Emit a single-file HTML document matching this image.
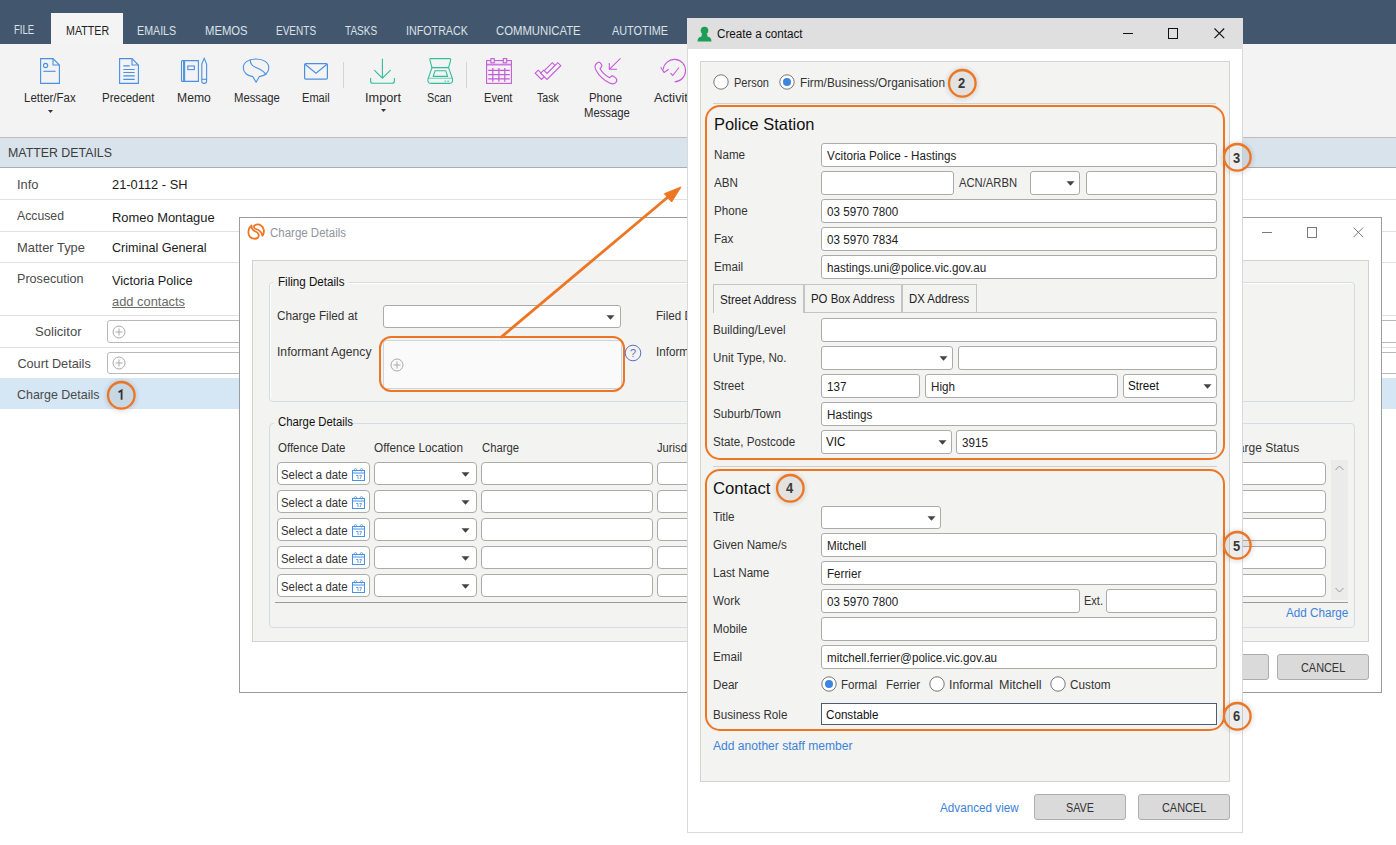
<!DOCTYPE html>
<html><head><meta charset="utf-8"><title>page</title>
<style>
html,body{margin:0;padding:0;}
body{width:1396px;height:845px;position:relative;overflow:hidden;background:#fff;font-family:'Liberation Sans', sans-serif;}
.a{position:absolute;}
.t{white-space:nowrap;}
svg.a{overflow:visible;}
</style></head><body>
<div class="a" style="left:0px;top:0px;width:1396px;height:44px;background:#42576e;"></div>
<div class="a" style="left:51px;top:13px;width:72px;height:31px;background:#f4f4f4;"></div>
<span class="a t" style="left:13.5px;top:24.42px;font-size:12.5px;line-height:12.5px;color:#dde2e8;font-weight:normal;font-family:'Liberation Sans', sans-serif;transform:scaleX(0.7612);transform-origin:0 0;">FILE</span>
<span class="a t" style="left:65.7px;top:25.42px;font-size:12.5px;line-height:12.5px;color:#1e1e1e;font-weight:normal;font-family:'Liberation Sans', sans-serif;transform:scaleX(0.8540);transform-origin:0 0;">MATTER</span>
<span class="a t" style="left:137.4px;top:25.42px;font-size:12.5px;line-height:12.5px;color:#dde2e8;font-weight:normal;font-family:'Liberation Sans', sans-serif;transform:scaleX(0.8548);transform-origin:0 0;">EMAILS</span>
<span class="a t" style="left:205.2px;top:25.42px;font-size:12.5px;line-height:12.5px;color:#dde2e8;font-weight:normal;font-family:'Liberation Sans', sans-serif;transform:scaleX(0.9019);transform-origin:0 0;">MEMOS</span>
<span class="a t" style="left:276.4px;top:25.42px;font-size:12.5px;line-height:12.5px;color:#dde2e8;font-weight:normal;font-family:'Liberation Sans', sans-serif;transform:scaleX(0.8017);transform-origin:0 0;">EVENTS</span>
<span class="a t" style="left:345.2px;top:25.42px;font-size:12.5px;line-height:12.5px;color:#dde2e8;font-weight:normal;font-family:'Liberation Sans', sans-serif;transform:scaleX(0.8037);transform-origin:0 0;">TASKS</span>
<span class="a t" style="left:406.3px;top:25.42px;font-size:12.5px;line-height:12.5px;color:#dde2e8;font-weight:normal;font-family:'Liberation Sans', sans-serif;transform:scaleX(0.8569);transform-origin:0 0;">INFOTRACK</span>
<span class="a t" style="left:496px;top:25.42px;font-size:12.5px;line-height:12.5px;color:#dde2e8;font-weight:normal;font-family:'Liberation Sans', sans-serif;transform:scaleX(0.9047);transform-origin:0 0;">COMMUNICATE</span>
<span class="a t" style="left:612px;top:25.42px;font-size:12.5px;line-height:12.5px;color:#dde2e8;font-weight:normal;font-family:'Liberation Sans', sans-serif;transform:scaleX(0.8701);transform-origin:0 0;">AUTOTIME</span>
<div class="a" style="left:0px;top:44px;width:1396px;height:93px;background:#f3f3f3;"></div>
<div class="a" style="left:0px;top:137px;width:1396px;height:1px;background:#bdbdbd;"></div>
<span class="a t" style="left:24.3px;top:91.84px;font-size:12px;line-height:12px;color:#2b2b2b;font-weight:normal;font-family:'Liberation Sans', sans-serif;transform:scaleX(0.9569);transform-origin:0 0;">Letter/Fax</span>
<span class="a t" style="left:102.3px;top:91.84px;font-size:12px;line-height:12px;color:#2b2b2b;font-weight:normal;font-family:'Liberation Sans', sans-serif;transform:scaleX(0.9579);transform-origin:0 0;">Precedent</span>
<span class="a t" style="left:177.2px;top:91.84px;font-size:12px;line-height:12px;color:#2b2b2b;font-weight:normal;font-family:'Liberation Sans', sans-serif;transform:scaleX(1.0137);transform-origin:0 0;">Memo</span>
<span class="a t" style="left:233.6px;top:91.84px;font-size:12px;line-height:12px;color:#2b2b2b;font-weight:normal;font-family:'Liberation Sans', sans-serif;transform:scaleX(0.9424);transform-origin:0 0;">Message</span>
<span class="a t" style="left:302px;top:91.84px;font-size:12px;line-height:12px;color:#2b2b2b;font-weight:normal;font-family:'Liberation Sans', sans-serif;transform:scaleX(0.9229);transform-origin:0 0;">Email</span>
<span class="a t" style="left:365px;top:91.84px;font-size:12px;line-height:12px;color:#2b2b2b;font-weight:normal;font-family:'Liberation Sans', sans-serif;transform:scaleX(1.0613);transform-origin:0 0;">Import</span>
<span class="a t" style="left:427.2px;top:91.84px;font-size:12px;line-height:12px;color:#2b2b2b;font-weight:normal;font-family:'Liberation Sans', sans-serif;transform:scaleX(0.8955);transform-origin:0 0;">Scan</span>
<span class="a t" style="left:484.4px;top:91.84px;font-size:12px;line-height:12px;color:#2b2b2b;font-weight:normal;font-family:'Liberation Sans', sans-serif;transform:scaleX(0.9255);transform-origin:0 0;">Event</span>
<span class="a t" style="left:537.3px;top:91.84px;font-size:12px;line-height:12px;color:#2b2b2b;font-weight:normal;font-family:'Liberation Sans', sans-serif;transform:scaleX(0.8871);transform-origin:0 0;">Task</span>
<span class="a t" style="left:589.4px;top:91.84px;font-size:12px;line-height:12px;color:#2b2b2b;font-weight:normal;font-family:'Liberation Sans', sans-serif;transform:scaleX(0.9509);transform-origin:0 0;">Phone</span>
<span class="a t" style="left:583.7px;top:107.04px;font-size:12px;line-height:12px;color:#2b2b2b;font-weight:normal;font-family:'Liberation Sans', sans-serif;transform:scaleX(0.9424);transform-origin:0 0;">Message</span>
<span class="a t" style="left:654px;top:91.84px;font-size:12px;line-height:12px;color:#2b2b2b;font-weight:normal;font-family:'Liberation Sans', sans-serif;transform:scaleX(1.0561);transform-origin:0 0;">Activities</span>
<svg class="a" style="left:47.5px;top:109.5px;" width="5" height="3" viewBox="0 0 5 3"><path d="M0 0H5L2.5 3Z" fill="#333"/></svg>
<svg class="a" style="left:380.5px;top:108.5px;" width="5" height="3" viewBox="0 0 5 3"><path d="M0 0H5L2.5 3Z" fill="#333"/></svg>
<div class="a" style="left:343px;top:62px;width:1px;height:26px;background:#d4d4d4;"></div>
<div class="a" style="left:466px;top:62px;width:1px;height:26px;background:#d4d4d4;"></div>
<svg class="a" style="left:0;top:0" width="687" height="137" viewBox="0 0 687 137"><g fill="none" stroke="#4a90e2" stroke-width="1.1" stroke-linejoin="miter"><path d="M40.6 58.6H53L59.4 65V83.4H40.6Z"/><path d="M53 58.8V65H59.2" stroke-linejoin="round"/><circle cx="45.6" cy="65.5" r="2.1"/><path d="M43.3 71.3H55.6"/></g><g fill="none" stroke="#4a90e2" stroke-width="1.1"><path d="M119.6 58.6H132L138.4 65V83.4H119.6Z"/><path d="M132 58.8V65H138.2"/><path d="M123.3 65.9H129.7M123.3 69.5H134.7M123.3 72.5H134.7M123.3 75.8H134.7M123.3 79.3H134.7" stroke-width="1.2"/></g><g fill="none" stroke="#4a90e2" stroke-width="1.1"><path d="M184.6 60.6H198.4V81.4H184.6Z"/><path d="M183.6 60.6H182.5Q181.5 60.6 181.5 61.6V80.4Q181.5 81.4 182.5 81.4H183.6Z"/><rect x="187.8" y="66" width="6.6" height="3.6"/><path d="M201.8 64L204.2 58.3L206.6 64V81.6Q206.6 83.4 204.2 83.4Q201.8 83.4 201.8 81.6Z"/><path d="M201.8 79.3H206.6"/></g><g fill="none" stroke="#4a90e2" stroke-width="1.1" stroke-linejoin="round"><path d="M256 59C263.5 59 268.8 62.5 268.8 67.8C268.8 72.5 265 76 259.3 76.6L256.1 82.3L252.8 76.6C247.3 76 243.3 72.5 243.3 67.8C243.3 62.5 248.5 59 256 59Z"/><path d="M250.3 59.5C250 63 252 66 256 67.5C261 69.5 264.5 71 266 75"/></g><g fill="none" stroke="#4a90e2" stroke-width="1.2"><rect x="304.6" y="63.6" width="22.8" height="15.6" rx="1.2"/><path d="M305 64.2L316 73.2L327 64.2"/></g><g fill="none" stroke="#2fbf9a" stroke-width="1.1"><path d="M382.4 58.8V78.2M374.3 70.1L382.4 78.2L390.6 70.1"/><path d="M370.6 78V81Q370.6 83.3 373 83.3H392Q394.4 83.3 394.4 81V78"/></g><g fill="none" stroke="#2fbf9a" stroke-width="1.1" stroke-linejoin="round"><path d="M430.5 58.6H449.6Q451 58.6 450.6 60.4L448.6 67.6H432L430 60.4Q429.6 58.6 430.5 58.6Z"/><path d="M432 67.6L428 79Q427.3 83.4 431 83.4H449.5Q453.2 83.4 452.5 79L448.6 67.6"/><path d="M435 70.8H445.8L447.6 76.4H433.2Z"/><path d="M428.3 78.3H452.2" stroke-opacity="0.6"/><path d="M431.5 67.5H449" stroke-opacity="0.5"/><path d="M444.6 81.2H446.2M447.4 81.2H449" stroke-width="1"/></g><g fill="none" stroke="#c35bd9" stroke-width="1.1"><rect x="486.6" y="60.6" width="24.8" height="22.8"/><path d="M486.6 64.6H511.4" stroke-width="1.8" stroke-opacity="0.8"/><rect x="490.9" y="58.6" width="3.4" height="4.2" fill="#f3f3f3"/><rect x="503.3" y="58.6" width="3.4" height="4.2" fill="#f3f3f3"/><path d="M488.2 70.3H509.8M488.2 74.6H509.8M488.2 78.9H509.8M492.8 68V81.8M498.9 68V81.8M504.8 68V81.8" stroke-width="1.2"/></g><g fill="#f3f3f3" stroke="#c35bd9" stroke-width="1.1" stroke-linejoin="miter"><path d="M535.2 73.2L538.2 70.2L541.5 73.5L552.3 62.7L555.3 65.7L541.5 79.5Z"/><path d="M540.7 73.2L543.7 70.2L547 73.5L557.8 62.7L560.8 65.7L547 79.5Z"/></g><g fill="none" stroke="#c35bd9" stroke-width="1.1" stroke-linejoin="round"><path d="M596.5 63.5C594.8 65 594.6 67.5 596 70.2C598.6 75 604.6 80.6 609.6 83C612 84.2 614.6 84 616 82.3C617.2 80.8 617 79.3 615.8 78.2L614 76.6C612.8 75.6 611.5 75.8 610.5 76.8L609.5 77.8C606 76 601.8 72 600 68.6L601 67.4C602 66.3 602 64.9 601.1 63.8L599.8 62.4C598.9 61.6 597.6 62.5 596.5 63.5Z"/><path d="M620.5 58.3L609.3 69.3M609.3 62.9V69.3H617"/></g><g fill="none" stroke="#c35bd9" stroke-width="1.1"><path d="M663.2 69.5A11.2 11.2 0 1 1 674.6 81.8"/><path d="M660.7 67.3L664.1 72.4L668.7 69.2"/><path d="M670.4 73.2L672.7 75.5L679 67.5"/></g></svg>
<div class="a" style="left:0px;top:138px;width:1396px;height:29px;background:#d9e3ec;"></div>
<div class="a" style="left:0px;top:167px;width:1396px;height:1px;background:#a8adb3;"></div>
<span class="a t" style="left:7.5px;top:146.29px;font-size:13.6px;line-height:13.6px;color:#3d3d3d;font-weight:normal;font-family:'Liberation Sans', sans-serif;transform:scaleX(0.9098);transform-origin:0 0;">MATTER DETAILS</span>
<span class="a t" style="left:17.4px;top:179.45px;font-size:12.7px;line-height:12.7px;color:#4a4a4a;font-weight:normal;font-family:'Liberation Sans', sans-serif;transform:scaleX(1.0155);transform-origin:0 0;">Info</span>
<span class="a t" style="left:112.3px;top:179.45px;font-size:12.7px;line-height:12.7px;color:#1b1b1b;font-weight:normal;font-family:'Liberation Sans', sans-serif;transform:scaleX(1.0130);transform-origin:0 0;">21-0112 - SH</span>
<div class="a" style="left:0px;top:199px;width:1396px;height:1px;background:#e1e1e1;"></div>
<span class="a t" style="left:17.4px;top:210.45px;font-size:12.7px;line-height:12.7px;color:#4a4a4a;font-weight:normal;font-family:'Liberation Sans', sans-serif;transform:scaleX(0.9657);transform-origin:0 0;">Accused</span>
<span class="a t" style="left:112.3px;top:212.05px;font-size:12.7px;line-height:12.7px;color:#1b1b1b;font-weight:normal;font-family:'Liberation Sans', sans-serif;transform:scaleX(1.0173);transform-origin:0 0;">Romeo Montague</span>
<div class="a" style="left:0px;top:231px;width:1396px;height:1px;background:#e1e1e1;"></div>
<span class="a t" style="left:17.4px;top:241.95px;font-size:12.7px;line-height:12.7px;color:#4a4a4a;font-weight:normal;font-family:'Liberation Sans', sans-serif;transform:scaleX(1.0185);transform-origin:0 0;">Matter Type</span>
<span class="a t" style="left:112.3px;top:241.75px;font-size:12.7px;line-height:12.7px;color:#1b1b1b;font-weight:normal;font-family:'Liberation Sans', sans-serif;transform:scaleX(0.9928);transform-origin:0 0;">Criminal General</span>
<div class="a" style="left:0px;top:262px;width:1396px;height:1px;background:#e1e1e1;"></div>
<span class="a t" style="left:17.4px;top:272.65px;font-size:12.7px;line-height:12.7px;color:#4a4a4a;font-weight:normal;font-family:'Liberation Sans', sans-serif;transform:scaleX(0.9925);transform-origin:0 0;">Prosecution</span>
<span class="a t" style="left:112.3px;top:274.55px;font-size:12.7px;line-height:12.7px;color:#1b1b1b;font-weight:normal;font-family:'Liberation Sans', sans-serif;transform:scaleX(1.0041);transform-origin:0 0;">Victoria Police</span>
<span class="a t" style="left:112.3px;top:295.75px;font-size:12.7px;line-height:12.7px;color:#6a6a6a;font-weight:normal;font-family:'Liberation Sans', sans-serif;transform:scaleX(1.0145);transform-origin:0 0;text-decoration:underline;">add contacts</span>
<div class="a" style="left:0px;top:315px;width:1396px;height:1px;background:#e1e1e1;"></div>
<span class="a t" style="left:35px;top:326.25px;font-size:12.7px;line-height:12.7px;color:#4a4a4a;font-weight:normal;font-family:'Liberation Sans', sans-serif;transform:scaleX(1.0305);transform-origin:0 0;">Solicitor</span>
<div class="a" style="left:107px;top:320px;width:1293px;height:23px;background:#fff;border:1px solid #b9b9b9;box-sizing:border-box;border-radius:3px;"></div>
<div class="a" style="left:0px;top:347px;width:1396px;height:1px;background:#e1e1e1;"></div>
<span class="a t" style="left:17.4px;top:357.95px;font-size:12.7px;line-height:12.7px;color:#4a4a4a;font-weight:normal;font-family:'Liberation Sans', sans-serif;">Court Details</span>
<div class="a" style="left:107px;top:352px;width:1293px;height:22px;background:#fff;border:1px solid #b9b9b9;box-sizing:border-box;border-radius:3px;"></div>
<svg class="a" style="left:112px;top:324.5px;" width="14" height="14" viewBox="0 0 14 14"><circle cx="7" cy="7" r="6" fill="none" stroke="#aaa" stroke-width="1"/><path d="M7 3.5V10.5M3.5 7H10.5" stroke="#aaa" stroke-width="1"/></svg>
<svg class="a" style="left:112px;top:355.5px;" width="14" height="14" viewBox="0 0 14 14"><circle cx="7" cy="7" r="6" fill="none" stroke="#aaa" stroke-width="1"/><path d="M7 3.5V10.5M3.5 7H10.5" stroke="#aaa" stroke-width="1"/></svg>
<div class="a" style="left:0px;top:378px;width:1396px;height:31px;background:#d5e6f5;"></div>
<span class="a t" style="left:17.4px;top:389.25px;font-size:12.7px;line-height:12.7px;color:#4a4a4a;font-weight:normal;font-family:'Liberation Sans', sans-serif;transform:scaleX(0.9819);transform-origin:0 0;">Charge Details</span>
<div class="a" style="left:239px;top:217px;width:1143px;height:476px;background:#fff;border:1px solid #9c9c9c;box-sizing:border-box;"></div>
<svg class="a" style="left:244px;top:220px;" width="26" height="24" viewBox="0 0 26 24"><path d="M7.5 5.5C4 8.5 3.5 14 6 16.8C8 19 12 19.5 14 17.5C15.5 15.5 14.5 12.5 11.5 11.5C9 10.5 7.5 9 7.5 5.5Z" fill="none" stroke="#ee7623" stroke-width="1.8" stroke-linejoin="round"/><path d="M18.5 15.8C21 12.5 20 7.5 17 5.5C15 4 12 4.5 10.5 5.5C9.5 6.5 10 8.5 12 9C15 10 17.5 11 18.5 15.8Z" fill="none" stroke="#ee7623" stroke-width="1.8" stroke-linejoin="round"/></svg>
<span class="a t" style="left:269.6px;top:226.72px;font-size:12.5px;line-height:12.5px;color:#8e959c;font-weight:normal;font-family:'Liberation Sans', sans-serif;transform:scaleX(0.9191);transform-origin:0 0;">Charge Details</span>
<div class="a" style="left:1262px;top:232px;width:10px;height:1px;background:#7a7a7a;"></div>
<div class="a" style="left:1307px;top:227px;width:10px;height:10.5px;background:transparent;border:1px solid #7a7a7a;box-sizing:border-box;"></div>
<svg class="a" style="left:1353px;top:227px;" width="11" height="11" viewBox="0 0 11 11"><path d="M0.5 0.5L10.2 10.2M10.2 0.5L0.5 10.2" stroke="#7a7a7a" stroke-width="1"/></svg>
<div class="a" style="left:252px;top:260px;width:1117px;height:382px;background:#f3f3f2;border:1px solid #d2d2d2;box-sizing:border-box;"></div>
<div class="a" style="left:269px;top:282px;width:1086px;height:120px;background:transparent;border:1px solid #d3dde6;box-sizing:border-box;border-radius:4px;box-shadow: inset 1px 1px 0 #fff;"></div>
<div class="a" style="left:273px;top:276px;width:75px;height:14px;background:#f3f3f2;"></div>
<span class="a t" style="left:277.5px;top:275.64px;font-size:12px;line-height:12px;color:#111;font-weight:normal;font-family:'Liberation Sans', sans-serif;transform:scaleX(0.9679);transform-origin:0 0;">Filing Details</span>
<span class="a t" style="left:277.3px;top:309.84px;font-size:12px;line-height:12px;color:#333;font-weight:normal;font-family:'Liberation Sans', sans-serif;transform:scaleX(0.9811);transform-origin:0 0;">Charge Filed at</span>
<div class="a" style="left:383px;top:305px;width:238px;height:23px;background:#fff;border:1px solid #ababab;box-sizing:border-box;border-radius:3px;"></div>
<svg class="a" style="left:606px;top:315px;" width="9" height="5" viewBox="0 0 9 5"><path d="M0.5 0.3H8.5L4.5 4.8Z" fill="#444"/></svg>
<span class="a t" style="left:656.4px;top:309.84px;font-size:12px;line-height:12px;color:#333;font-weight:normal;font-family:'Liberation Sans', sans-serif;transform:scaleX(0.9700);transform-origin:0 0;">Filed Date</span>
<span class="a t" style="left:277.3px;top:346.24px;font-size:12px;line-height:12px;color:#333;font-weight:normal;font-family:'Liberation Sans', sans-serif;transform:scaleX(1.0119);transform-origin:0 0;">Informant Agency</span>
<div class="a" style="left:383px;top:340px;width:239px;height:49px;background:#fafafa;border:1px solid #cbd7e0;box-sizing:border-box;border-radius:3px;"></div>
<svg class="a" style="left:389.5px;top:358px;" width="14" height="14" viewBox="0 0 14 14"><circle cx="7" cy="7" r="6" fill="none" stroke="#aaa" stroke-width="1"/><path d="M7 3.5V10.5M3.5 7H10.5" stroke="#aaa" stroke-width="1"/></svg>
<div class="a" style="left:379px;top:336px;width:246px;height:56px;background:transparent;border:2.5px solid #ee7623;box-sizing:border-box;border-radius:12px;"></div>
<svg class="a" style="left:624px;top:344px;" width="18" height="18" viewBox="0 0 18 18"><circle cx="9" cy="9" r="7.8" fill="none" stroke="#5a6fc9" stroke-width="1"/><text x="9" y="13" text-anchor="middle" font-family="Liberation Sans" font-size="11" fill="#5a6fc9">?</text></svg>
<span class="a t" style="left:656.4px;top:346.24px;font-size:12px;line-height:12px;color:#333;font-weight:normal;font-family:'Liberation Sans', sans-serif;transform:scaleX(0.9700);transform-origin:0 0;">Informant Name</span>
<svg class="a" style="left:495px;top:180px;" width="200" height="165" viewBox="0 0 200 165"><path d="M6.5 156.9L173 17" stroke="#ee7623" stroke-width="2.8" stroke-linecap="round"/><path d="M186 7L169.3 13.7L176.6 22Z" fill="#ee7623" stroke="#ee7623" stroke-width="1" stroke-linejoin="round"/></svg>
<div class="a" style="left:269px;top:423px;width:1086px;height:205px;background:transparent;border:1px solid #d3dde6;box-sizing:border-box;border-radius:4px;"></div>
<div class="a" style="left:274px;top:416px;width:72px;height:14px;background:#f3f3f2;"></div>
<span class="a t" style="left:277.6px;top:416.44px;font-size:12px;line-height:12px;color:#111;font-weight:normal;font-family:'Liberation Sans', sans-serif;transform:scaleX(0.9449);transform-origin:0 0;">Charge Details</span>
<span class="a t" style="left:277.6px;top:442.34px;font-size:12px;line-height:12px;color:#333;font-weight:normal;font-family:'Liberation Sans', sans-serif;transform:scaleX(0.9574);transform-origin:0 0;">Offence Date</span>
<span class="a t" style="left:374.2px;top:442.34px;font-size:12px;line-height:12px;color:#333;font-weight:normal;font-family:'Liberation Sans', sans-serif;transform:scaleX(0.9833);transform-origin:0 0;">Offence Location</span>
<span class="a t" style="left:481.7px;top:442.34px;font-size:12px;line-height:12px;color:#333;font-weight:normal;font-family:'Liberation Sans', sans-serif;transform:scaleX(0.9401);transform-origin:0 0;">Charge</span>
<span class="a t" style="left:657.4px;top:442.34px;font-size:12px;line-height:12px;color:#333;font-weight:normal;font-family:'Liberation Sans', sans-serif;transform:scaleX(0.9328);transform-origin:0 0;">Jurisdiction</span>
<span class="a t" style="left:1222.5px;top:442.34px;font-size:12px;line-height:12px;color:#333;font-weight:normal;font-family:'Liberation Sans', sans-serif;">Charge Status</span>
<div class="a" style="left:277px;top:462px;width:93px;height:23px;background:#fff;border:1px solid #ababab;box-sizing:border-box;border-radius:4px;"></div>
<span class="a t" style="left:281.2px;top:468.64px;font-size:12px;line-height:12px;color:#333;font-weight:normal;font-family:'Liberation Sans', sans-serif;transform:scaleX(0.9506);transform-origin:0 0;">Select a date</span>
<svg class="a" style="left:352px;top:467.5px;" width="13" height="13" viewBox="0 0 13 13"><rect x="0.5" y="2.5" width="12" height="10" fill="none" stroke="#4a90e2" stroke-width="1"/><path d="M0.5 5H12.5" stroke="#4a90e2" stroke-width="1"/><circle cx="3.5" cy="1.8" r="1.2" fill="none" stroke="#4a90e2" stroke-width="0.8"/><circle cx="9.5" cy="1.8" r="1.2" fill="none" stroke="#4a90e2" stroke-width="0.8"/><path d="M4 7.5H6V11M7.5 7.5H9.5L8 11" fill="none" stroke="#4a90e2" stroke-width="0.8"/></svg>
<div class="a" style="left:374px;top:462px;width:103px;height:23px;background:#fff;border:1px solid #ababab;box-sizing:border-box;border-radius:4px;"></div>
<svg class="a" style="left:461px;top:471.5px;" width="9" height="5" viewBox="0 0 9 5"><path d="M0.5 0.3H8.5L4.5 4.8Z" fill="#444"/></svg>
<div class="a" style="left:481px;top:462px;width:172px;height:23px;background:#fff;border:1px solid #ababab;box-sizing:border-box;border-radius:4px;"></div>
<div class="a" style="left:657px;top:462px;width:243px;height:23px;background:#fff;border:1px solid #ababab;box-sizing:border-box;border-radius:4px;"></div>
<div class="a" style="left:1100px;top:462px;width:226px;height:23px;background:#fff;border:1px solid #ababab;box-sizing:border-box;border-radius:4px;"></div>
<div class="a" style="left:277px;top:490px;width:93px;height:23px;background:#fff;border:1px solid #ababab;box-sizing:border-box;border-radius:4px;"></div>
<span class="a t" style="left:281.2px;top:496.64px;font-size:12px;line-height:12px;color:#333;font-weight:normal;font-family:'Liberation Sans', sans-serif;transform:scaleX(0.9506);transform-origin:0 0;">Select a date</span>
<svg class="a" style="left:352px;top:495.5px;" width="13" height="13" viewBox="0 0 13 13"><rect x="0.5" y="2.5" width="12" height="10" fill="none" stroke="#4a90e2" stroke-width="1"/><path d="M0.5 5H12.5" stroke="#4a90e2" stroke-width="1"/><circle cx="3.5" cy="1.8" r="1.2" fill="none" stroke="#4a90e2" stroke-width="0.8"/><circle cx="9.5" cy="1.8" r="1.2" fill="none" stroke="#4a90e2" stroke-width="0.8"/><path d="M4 7.5H6V11M7.5 7.5H9.5L8 11" fill="none" stroke="#4a90e2" stroke-width="0.8"/></svg>
<div class="a" style="left:374px;top:490px;width:103px;height:23px;background:#fff;border:1px solid #ababab;box-sizing:border-box;border-radius:4px;"></div>
<svg class="a" style="left:461px;top:499.5px;" width="9" height="5" viewBox="0 0 9 5"><path d="M0.5 0.3H8.5L4.5 4.8Z" fill="#444"/></svg>
<div class="a" style="left:481px;top:490px;width:172px;height:23px;background:#fff;border:1px solid #ababab;box-sizing:border-box;border-radius:4px;"></div>
<div class="a" style="left:657px;top:490px;width:243px;height:23px;background:#fff;border:1px solid #ababab;box-sizing:border-box;border-radius:4px;"></div>
<div class="a" style="left:1100px;top:490px;width:226px;height:23px;background:#fff;border:1px solid #ababab;box-sizing:border-box;border-radius:4px;"></div>
<div class="a" style="left:277px;top:518px;width:93px;height:23px;background:#fff;border:1px solid #ababab;box-sizing:border-box;border-radius:4px;"></div>
<span class="a t" style="left:281.2px;top:524.64px;font-size:12px;line-height:12px;color:#333;font-weight:normal;font-family:'Liberation Sans', sans-serif;transform:scaleX(0.9506);transform-origin:0 0;">Select a date</span>
<svg class="a" style="left:352px;top:523.5px;" width="13" height="13" viewBox="0 0 13 13"><rect x="0.5" y="2.5" width="12" height="10" fill="none" stroke="#4a90e2" stroke-width="1"/><path d="M0.5 5H12.5" stroke="#4a90e2" stroke-width="1"/><circle cx="3.5" cy="1.8" r="1.2" fill="none" stroke="#4a90e2" stroke-width="0.8"/><circle cx="9.5" cy="1.8" r="1.2" fill="none" stroke="#4a90e2" stroke-width="0.8"/><path d="M4 7.5H6V11M7.5 7.5H9.5L8 11" fill="none" stroke="#4a90e2" stroke-width="0.8"/></svg>
<div class="a" style="left:374px;top:518px;width:103px;height:23px;background:#fff;border:1px solid #ababab;box-sizing:border-box;border-radius:4px;"></div>
<svg class="a" style="left:461px;top:527.5px;" width="9" height="5" viewBox="0 0 9 5"><path d="M0.5 0.3H8.5L4.5 4.8Z" fill="#444"/></svg>
<div class="a" style="left:481px;top:518px;width:172px;height:23px;background:#fff;border:1px solid #ababab;box-sizing:border-box;border-radius:4px;"></div>
<div class="a" style="left:657px;top:518px;width:243px;height:23px;background:#fff;border:1px solid #ababab;box-sizing:border-box;border-radius:4px;"></div>
<div class="a" style="left:1100px;top:518px;width:226px;height:23px;background:#fff;border:1px solid #ababab;box-sizing:border-box;border-radius:4px;"></div>
<div class="a" style="left:277px;top:546px;width:93px;height:23px;background:#fff;border:1px solid #ababab;box-sizing:border-box;border-radius:4px;"></div>
<span class="a t" style="left:281.2px;top:552.64px;font-size:12px;line-height:12px;color:#333;font-weight:normal;font-family:'Liberation Sans', sans-serif;transform:scaleX(0.9506);transform-origin:0 0;">Select a date</span>
<svg class="a" style="left:352px;top:551.5px;" width="13" height="13" viewBox="0 0 13 13"><rect x="0.5" y="2.5" width="12" height="10" fill="none" stroke="#4a90e2" stroke-width="1"/><path d="M0.5 5H12.5" stroke="#4a90e2" stroke-width="1"/><circle cx="3.5" cy="1.8" r="1.2" fill="none" stroke="#4a90e2" stroke-width="0.8"/><circle cx="9.5" cy="1.8" r="1.2" fill="none" stroke="#4a90e2" stroke-width="0.8"/><path d="M4 7.5H6V11M7.5 7.5H9.5L8 11" fill="none" stroke="#4a90e2" stroke-width="0.8"/></svg>
<div class="a" style="left:374px;top:546px;width:103px;height:23px;background:#fff;border:1px solid #ababab;box-sizing:border-box;border-radius:4px;"></div>
<svg class="a" style="left:461px;top:555.5px;" width="9" height="5" viewBox="0 0 9 5"><path d="M0.5 0.3H8.5L4.5 4.8Z" fill="#444"/></svg>
<div class="a" style="left:481px;top:546px;width:172px;height:23px;background:#fff;border:1px solid #ababab;box-sizing:border-box;border-radius:4px;"></div>
<div class="a" style="left:657px;top:546px;width:243px;height:23px;background:#fff;border:1px solid #ababab;box-sizing:border-box;border-radius:4px;"></div>
<div class="a" style="left:1100px;top:546px;width:226px;height:23px;background:#fff;border:1px solid #ababab;box-sizing:border-box;border-radius:4px;"></div>
<div class="a" style="left:277px;top:574px;width:93px;height:23px;background:#fff;border:1px solid #ababab;box-sizing:border-box;border-radius:4px;"></div>
<span class="a t" style="left:281.2px;top:580.64px;font-size:12px;line-height:12px;color:#333;font-weight:normal;font-family:'Liberation Sans', sans-serif;transform:scaleX(0.9506);transform-origin:0 0;">Select a date</span>
<svg class="a" style="left:352px;top:579.5px;" width="13" height="13" viewBox="0 0 13 13"><rect x="0.5" y="2.5" width="12" height="10" fill="none" stroke="#4a90e2" stroke-width="1"/><path d="M0.5 5H12.5" stroke="#4a90e2" stroke-width="1"/><circle cx="3.5" cy="1.8" r="1.2" fill="none" stroke="#4a90e2" stroke-width="0.8"/><circle cx="9.5" cy="1.8" r="1.2" fill="none" stroke="#4a90e2" stroke-width="0.8"/><path d="M4 7.5H6V11M7.5 7.5H9.5L8 11" fill="none" stroke="#4a90e2" stroke-width="0.8"/></svg>
<div class="a" style="left:374px;top:574px;width:103px;height:23px;background:#fff;border:1px solid #ababab;box-sizing:border-box;border-radius:4px;"></div>
<svg class="a" style="left:461px;top:583.5px;" width="9" height="5" viewBox="0 0 9 5"><path d="M0.5 0.3H8.5L4.5 4.8Z" fill="#444"/></svg>
<div class="a" style="left:481px;top:574px;width:172px;height:23px;background:#fff;border:1px solid #ababab;box-sizing:border-box;border-radius:4px;"></div>
<div class="a" style="left:657px;top:574px;width:243px;height:23px;background:#fff;border:1px solid #ababab;box-sizing:border-box;border-radius:4px;"></div>
<div class="a" style="left:1100px;top:574px;width:226px;height:23px;background:#fff;border:1px solid #ababab;box-sizing:border-box;border-radius:4px;"></div>
<div class="a" style="left:1331px;top:460px;width:17px;height:140px;background:#ebebeb;"></div>
<svg class="a" style="left:1335px;top:465px;" width="9" height="6" viewBox="0 0 9 6"><path d="M0.5 5L4.5 1L8.5 5" fill="none" stroke="#999" stroke-width="1"/></svg>
<svg class="a" style="left:1335px;top:587px;" width="9" height="6" viewBox="0 0 9 6"><path d="M0.5 1L4.5 5L8.5 1" fill="none" stroke="#999" stroke-width="1"/></svg>
<div class="a" style="left:275px;top:602px;width:1073px;height:1px;background:#9a9a9a;"></div>
<span class="a t" style="left:1285.7px;top:606.84px;font-size:12px;line-height:12px;color:#3c82d8;font-weight:normal;font-family:'Liberation Sans', sans-serif;transform:scaleX(0.9727);transform-origin:0 0;">Add Charge</span>
<div class="a" style="left:1176px;top:654px;width:93px;height:26px;background:#dadada;border:1px solid #adadad;box-sizing:border-box;border-radius:3px;"></div>
<span class="a t" style="left:1205px;top:661.84px;font-size:12px;line-height:12px;color:#333;font-weight:normal;font-family:'Liberation Sans', sans-serif;transform:scaleX(0.9700);transform-origin:0 0;">OK</span>
<div class="a" style="left:1277px;top:654px;width:92px;height:26px;background:#dadada;border:1px solid #adadad;box-sizing:border-box;border-radius:3px;"></div>
<span class="a t" style="left:1300.7px;top:661.84px;font-size:12px;line-height:12px;color:#333;font-weight:normal;font-family:'Liberation Sans', sans-serif;transform:scaleX(0.9078);transform-origin:0 0;">CANCEL</span>
<div class="a" style="left:687px;top:18px;width:556px;height:815px;background:#fff;border:1px solid #d9d9d9;box-sizing:border-box;"></div>
<div class="a" style="left:687px;top:18px;width:556px;height:31px;background:#dfdfdf;"></div>
<svg class="a" style="left:697px;top:26px;" width="15" height="16" viewBox="0 0 15 16"><circle cx="7.5" cy="4.5" r="3.8" fill="#1f9d55"/><path d="M5 7.5H10L10.5 10.5C13 11 14.5 12.5 14.5 15.5H0.5C0.5 12.5 2 11 4.5 10.5Z" fill="#1f9d55"/></svg>
<span class="a t" style="left:717.3px;top:27.94px;font-size:12px;line-height:12px;color:#111;font-weight:normal;font-family:'Liberation Sans', sans-serif;transform:scaleX(0.9709);transform-origin:0 0;">Create a contact</span>
<div class="a" style="left:1123px;top:33px;width:10px;height:1px;background:#111;"></div>
<div class="a" style="left:1168px;top:28px;width:10px;height:10.5px;background:transparent;border:1.2px solid #111;box-sizing:border-box;"></div>
<svg class="a" style="left:1213.5px;top:27.5px;" width="11" height="11" viewBox="0 0 11 11"><path d="M0.5 0.5L10.2 10.2M10.2 0.5L0.5 10.2" stroke="#111" stroke-width="1.1"/></svg>
<div class="a" style="left:700px;top:61px;width:530px;height:721px;background:#f3f3f2;border:1px solid #d3d3d3;box-sizing:border-box;"></div>
<svg class="a" style="left:713px;top:74px;" width="16" height="16" viewBox="0 0 16 16"><circle cx="8" cy="8" r="7.2" fill="#fff" stroke="#777" stroke-width="1"/></svg>
<span class="a t" style="left:733.5px;top:76.84px;font-size:12px;line-height:12px;color:#333;font-weight:normal;font-family:'Liberation Sans', sans-serif;transform:scaleX(0.9203);transform-origin:0 0;">Person</span>
<svg class="a" style="left:779px;top:74px;" width="16" height="16" viewBox="0 0 16 16"><circle cx="8" cy="8" r="7.2" fill="#fff" stroke="#777" stroke-width="1"/><circle cx="8" cy="8" r="4" fill="#3b84e0"/></svg>
<span class="a t" style="left:799.6px;top:76.84px;font-size:12px;line-height:12px;color:#333;font-weight:normal;font-family:'Liberation Sans', sans-serif;transform:scaleX(0.9838);transform-origin:0 0;">Firm/Business/Organisation</span>
<div class="a" style="left:713px;top:103px;width:503px;height:1px;background:#d0d0d0;"></div>
<div class="a" style="left:705.4px;top:105.4px;width:519.6999999999999px;height:354.20000000000005px;background:transparent;border:2.2px solid #ee7623;box-sizing:border-box;border-radius:15px;"></div>
<span class="a t" style="left:713.6px;top:115.83px;font-size:16.5px;line-height:16.5px;color:#111;font-weight:normal;font-family:'Liberation Sans', sans-serif;transform:scaleX(0.9960);transform-origin:0 0;">Police Station</span>
<span class="a t" style="left:713.6px;top:148.54px;font-size:12px;line-height:12px;color:#333;font-weight:normal;font-family:'Liberation Sans', sans-serif;transform:scaleX(0.9700);transform-origin:0 0;">Name</span>
<span class="a t" style="left:713.6px;top:176.54px;font-size:12px;line-height:12px;color:#333;font-weight:normal;font-family:'Liberation Sans', sans-serif;transform:scaleX(0.9700);transform-origin:0 0;">ABN</span>
<span class="a t" style="left:713.6px;top:204.54px;font-size:12px;line-height:12px;color:#333;font-weight:normal;font-family:'Liberation Sans', sans-serif;transform:scaleX(0.9700);transform-origin:0 0;">Phone</span>
<span class="a t" style="left:713.6px;top:232.54px;font-size:12px;line-height:12px;color:#333;font-weight:normal;font-family:'Liberation Sans', sans-serif;transform:scaleX(0.9700);transform-origin:0 0;">Fax</span>
<span class="a t" style="left:713.6px;top:260.54px;font-size:12px;line-height:12px;color:#333;font-weight:normal;font-family:'Liberation Sans', sans-serif;transform:scaleX(0.9700);transform-origin:0 0;">Email</span>
<div class="a" style="left:821px;top:143px;width:396px;height:24px;background:#fff;border:1px solid #ababab;box-sizing:border-box;border-radius:3px;"></div>
<span class="a t" style="left:827px;top:150.14px;font-size:12px;line-height:12px;color:#222;font-weight:normal;font-family:'Liberation Sans', sans-serif;transform:scaleX(0.9700);transform-origin:0 0;">Vcitoria Police - Hastings</span>
<div class="a" style="left:821px;top:171px;width:133px;height:24px;background:#fff;border:1px solid #ababab;box-sizing:border-box;border-radius:3px;"></div>
<span class="a t" style="left:959.3px;top:176.64px;font-size:12px;line-height:12px;color:#333;font-weight:normal;font-family:'Liberation Sans', sans-serif;transform:scaleX(0.9352);transform-origin:0 0;">ACN/ARBN</span>
<div class="a" style="left:1030px;top:171px;width:50px;height:24px;background:#fff;border:1px solid #ababab;box-sizing:border-box;border-radius:3px;"></div>
<svg class="a" style="left:1066px;top:181.0px;" width="9" height="5" viewBox="0 0 9 5"><path d="M0.5 0.3H8.5L4.5 4.8Z" fill="#444"/></svg>
<div class="a" style="left:1086px;top:171px;width:131px;height:24px;background:#fff;border:1px solid #ababab;box-sizing:border-box;border-radius:3px;"></div>
<div class="a" style="left:821px;top:199px;width:396px;height:24px;background:#fff;border:1px solid #ababab;box-sizing:border-box;border-radius:3px;"></div>
<span class="a t" style="left:827px;top:206.14px;font-size:12px;line-height:12px;color:#222;font-weight:normal;font-family:'Liberation Sans', sans-serif;transform:scaleX(0.9700);transform-origin:0 0;">03 5970 7800</span>
<div class="a" style="left:821px;top:227px;width:396px;height:24px;background:#fff;border:1px solid #ababab;box-sizing:border-box;border-radius:3px;"></div>
<span class="a t" style="left:827px;top:234.14px;font-size:12px;line-height:12px;color:#222;font-weight:normal;font-family:'Liberation Sans', sans-serif;transform:scaleX(0.9700);transform-origin:0 0;">03 5970 7834</span>
<div class="a" style="left:821px;top:255px;width:396px;height:24px;background:#fff;border:1px solid #ababab;box-sizing:border-box;border-radius:3px;"></div>
<span class="a t" style="left:827px;top:262.14px;font-size:12px;line-height:12px;color:#222;font-weight:normal;font-family:'Liberation Sans', sans-serif;transform:scaleX(0.9700);transform-origin:0 0;">hastings.uni@police.vic.gov.au</span>
<div class="a" style="left:713px;top:312px;width:504px;height:1px;background:#c4c4c4;"></div>
<div class="a" style="left:713px;top:283.5px;width:91px;height:29.5px;background:#f3f3f2;border:1px solid #c4c4c4;box-sizing:border-box;border-bottom:none;"></div>
<div class="a" style="left:804px;top:283.5px;width:98px;height:29.0px;background:#f3f3f2;border:1px solid #c4c4c4;box-sizing:border-box;"></div>
<div class="a" style="left:902px;top:283.5px;width:75px;height:29.0px;background:#f3f3f2;border:1px solid #c4c4c4;box-sizing:border-box;"></div>
<span class="a t" style="left:720px;top:293.84px;font-size:12px;line-height:12px;color:#222;font-weight:normal;font-family:'Liberation Sans', sans-serif;transform:scaleX(0.9693);transform-origin:0 0;">Street Address</span>
<span class="a t" style="left:811.3px;top:292.84px;font-size:12px;line-height:12px;color:#222;font-weight:normal;font-family:'Liberation Sans', sans-serif;transform:scaleX(0.9506);transform-origin:0 0;">PO Box Address</span>
<span class="a t" style="left:909.2px;top:292.84px;font-size:12px;line-height:12px;color:#222;font-weight:normal;font-family:'Liberation Sans', sans-serif;transform:scaleX(0.9499);transform-origin:0 0;">DX Address</span>
<span class="a t" style="left:713.4px;top:323.84px;font-size:12px;line-height:12px;color:#333;font-weight:normal;font-family:'Liberation Sans', sans-serif;transform:scaleX(0.9700);transform-origin:0 0;">Building/Level</span>
<span class="a t" style="left:713.4px;top:351.84px;font-size:12px;line-height:12px;color:#333;font-weight:normal;font-family:'Liberation Sans', sans-serif;transform:scaleX(0.9700);transform-origin:0 0;">Unit Type, No.</span>
<span class="a t" style="left:713.4px;top:379.84px;font-size:12px;line-height:12px;color:#333;font-weight:normal;font-family:'Liberation Sans', sans-serif;transform:scaleX(0.9700);transform-origin:0 0;">Street</span>
<span class="a t" style="left:713.4px;top:407.84px;font-size:12px;line-height:12px;color:#333;font-weight:normal;font-family:'Liberation Sans', sans-serif;transform:scaleX(0.9700);transform-origin:0 0;">Suburb/Town</span>
<span class="a t" style="left:713.4px;top:435.84px;font-size:12px;line-height:12px;color:#333;font-weight:normal;font-family:'Liberation Sans', sans-serif;transform:scaleX(0.9700);transform-origin:0 0;">State, Postcode</span>
<div class="a" style="left:821px;top:318px;width:396px;height:24px;background:#fff;border:1px solid #ababab;box-sizing:border-box;border-radius:3px;"></div>
<div class="a" style="left:821px;top:346px;width:132px;height:24px;background:#fff;border:1px solid #ababab;box-sizing:border-box;border-radius:3px;"></div>
<svg class="a" style="left:939px;top:356.0px;" width="9" height="5" viewBox="0 0 9 5"><path d="M0.5 0.3H8.5L4.5 4.8Z" fill="#444"/></svg>
<div class="a" style="left:958px;top:346px;width:259px;height:24px;background:#fff;border:1px solid #ababab;box-sizing:border-box;border-radius:3px;"></div>
<div class="a" style="left:821px;top:374px;width:99px;height:24px;background:#fff;border:1px solid #ababab;box-sizing:border-box;border-radius:3px;"></div>
<span class="a t" style="left:827px;top:381.14px;font-size:12px;line-height:12px;color:#222;font-weight:normal;font-family:'Liberation Sans', sans-serif;transform:scaleX(0.9700);transform-origin:0 0;">137</span>
<div class="a" style="left:925px;top:374px;width:193px;height:24px;background:#fff;border:1px solid #ababab;box-sizing:border-box;border-radius:3px;"></div>
<span class="a t" style="left:931px;top:381.14px;font-size:12px;line-height:12px;color:#222;font-weight:normal;font-family:'Liberation Sans', sans-serif;transform:scaleX(0.9700);transform-origin:0 0;">High</span>
<div class="a" style="left:1123px;top:374px;width:94px;height:24px;background:#fff;border:1px solid #ababab;box-sizing:border-box;border-radius:3px;"></div>
<svg class="a" style="left:1203px;top:384.0px;" width="9" height="5" viewBox="0 0 9 5"><path d="M0.5 0.3H8.5L4.5 4.8Z" fill="#444"/></svg>
<span class="a t" style="left:1128px;top:379.64px;font-size:12px;line-height:12px;color:#111;font-weight:normal;font-family:'Liberation Sans', sans-serif;transform:scaleX(0.9700);transform-origin:0 0;">Street</span>
<div class="a" style="left:821px;top:402px;width:396px;height:24px;background:#fff;border:1px solid #ababab;box-sizing:border-box;border-radius:3px;"></div>
<span class="a t" style="left:827px;top:409.14px;font-size:12px;line-height:12px;color:#222;font-weight:normal;font-family:'Liberation Sans', sans-serif;transform:scaleX(0.9700);transform-origin:0 0;">Hastings</span>
<div class="a" style="left:821px;top:430px;width:131px;height:24px;background:#fff;border:1px solid #ababab;box-sizing:border-box;border-radius:3px;"></div>
<svg class="a" style="left:938px;top:440.0px;" width="9" height="5" viewBox="0 0 9 5"><path d="M0.5 0.3H8.5L4.5 4.8Z" fill="#444"/></svg>
<span class="a t" style="left:826px;top:435.64px;font-size:12px;line-height:12px;color:#111;font-weight:normal;font-family:'Liberation Sans', sans-serif;transform:scaleX(0.9700);transform-origin:0 0;">VIC</span>
<div class="a" style="left:956px;top:430px;width:261px;height:24px;background:#fff;border:1px solid #ababab;box-sizing:border-box;border-radius:3px;"></div>
<span class="a t" style="left:962px;top:437.14px;font-size:12px;line-height:12px;color:#222;font-weight:normal;font-family:'Liberation Sans', sans-serif;transform:scaleX(0.9700);transform-origin:0 0;">3915</span>
<div class="a" style="left:713px;top:466px;width:504px;height:1px;background:#d0d0d0;"></div>
<div class="a" style="left:705.2px;top:469.4px;width:519.5999999999999px;height:261.70000000000005px;background:transparent;border:2.2px solid #ee7623;box-sizing:border-box;border-radius:15px;"></div>
<span class="a t" style="left:713.3px;top:479.53px;font-size:16.5px;line-height:16.5px;color:#111;font-weight:normal;font-family:'Liberation Sans', sans-serif;transform:scaleX(1.0110);transform-origin:0 0;">Contact</span>
<span class="a t" style="left:713.4px;top:511.34px;font-size:12px;line-height:12px;color:#333;font-weight:normal;font-family:'Liberation Sans', sans-serif;transform:scaleX(0.9700);transform-origin:0 0;">Title</span>
<span class="a t" style="left:713.4px;top:538.84px;font-size:12px;line-height:12px;color:#333;font-weight:normal;font-family:'Liberation Sans', sans-serif;transform:scaleX(0.9700);transform-origin:0 0;">Given Name/s</span>
<span class="a t" style="left:713.4px;top:566.84px;font-size:12px;line-height:12px;color:#333;font-weight:normal;font-family:'Liberation Sans', sans-serif;transform:scaleX(0.9700);transform-origin:0 0;">Last Name</span>
<span class="a t" style="left:713.4px;top:594.84px;font-size:12px;line-height:12px;color:#333;font-weight:normal;font-family:'Liberation Sans', sans-serif;transform:scaleX(0.9700);transform-origin:0 0;">Work</span>
<span class="a t" style="left:713.4px;top:622.84px;font-size:12px;line-height:12px;color:#333;font-weight:normal;font-family:'Liberation Sans', sans-serif;transform:scaleX(0.9700);transform-origin:0 0;">Mobile</span>
<span class="a t" style="left:713.4px;top:650.84px;font-size:12px;line-height:12px;color:#333;font-weight:normal;font-family:'Liberation Sans', sans-serif;transform:scaleX(0.9700);transform-origin:0 0;">Email</span>
<div class="a" style="left:821px;top:506px;width:120px;height:23px;background:#fff;border:1px solid #ababab;box-sizing:border-box;border-radius:3px;"></div>
<svg class="a" style="left:927px;top:515.5px;" width="9" height="5" viewBox="0 0 9 5"><path d="M0.5 0.3H8.5L4.5 4.8Z" fill="#444"/></svg>
<div class="a" style="left:821px;top:533px;width:396px;height:24px;background:#fff;border:1px solid #ababab;box-sizing:border-box;border-radius:3px;"></div>
<span class="a t" style="left:827px;top:540.14px;font-size:12px;line-height:12px;color:#222;font-weight:normal;font-family:'Liberation Sans', sans-serif;transform:scaleX(0.9700);transform-origin:0 0;">Mitchell</span>
<div class="a" style="left:821px;top:561px;width:396px;height:24px;background:#fff;border:1px solid #ababab;box-sizing:border-box;border-radius:3px;"></div>
<span class="a t" style="left:827px;top:568.14px;font-size:12px;line-height:12px;color:#222;font-weight:normal;font-family:'Liberation Sans', sans-serif;transform:scaleX(0.9700);transform-origin:0 0;">Ferrier</span>
<div class="a" style="left:821px;top:589px;width:259px;height:24px;background:#fff;border:1px solid #ababab;box-sizing:border-box;border-radius:3px;"></div>
<span class="a t" style="left:827px;top:596.14px;font-size:12px;line-height:12px;color:#222;font-weight:normal;font-family:'Liberation Sans', sans-serif;transform:scaleX(0.9700);transform-origin:0 0;">03 5970 7800</span>
<span class="a t" style="left:1084px;top:594.84px;font-size:12px;line-height:12px;color:#333;font-weight:normal;font-family:'Liberation Sans', sans-serif;transform:scaleX(0.9191);transform-origin:0 0;">Ext.</span>
<div class="a" style="left:1106px;top:589px;width:111px;height:24px;background:#fff;border:1px solid #ababab;box-sizing:border-box;border-radius:3px;"></div>
<div class="a" style="left:821px;top:617px;width:396px;height:24px;background:#fff;border:1px solid #ababab;box-sizing:border-box;border-radius:3px;"></div>
<div class="a" style="left:821px;top:645px;width:396px;height:24px;background:#fff;border:1px solid #ababab;box-sizing:border-box;border-radius:3px;"></div>
<span class="a t" style="left:827px;top:652.14px;font-size:12px;line-height:12px;color:#222;font-weight:normal;font-family:'Liberation Sans', sans-serif;transform:scaleX(0.9700);transform-origin:0 0;">mitchell.ferrier@police.vic.gov.au</span>
<span class="a t" style="left:713.4px;top:679.34px;font-size:12px;line-height:12px;color:#333;font-weight:normal;font-family:'Liberation Sans', sans-serif;transform:scaleX(0.9700);transform-origin:0 0;">Dear</span>
<svg class="a" style="left:820.8px;top:676.3px;" width="16" height="16" viewBox="0 0 16 16"><circle cx="8" cy="8" r="7.2" fill="#fff" stroke="#777" stroke-width="1"/><circle cx="8" cy="8" r="4" fill="#3b84e0"/></svg>
<span class="a t" style="left:841px;top:679.34px;font-size:12px;line-height:12px;color:#333;font-weight:normal;font-family:'Liberation Sans', sans-serif;transform:scaleX(0.9640);transform-origin:0 0;">Formal</span>
<span class="a t" style="left:886.4px;top:679.34px;font-size:12px;line-height:12px;color:#333;font-weight:normal;font-family:'Liberation Sans', sans-serif;transform:scaleX(0.9620);transform-origin:0 0;">Ferrier</span>
<svg class="a" style="left:928.6px;top:676.3px;" width="16" height="16" viewBox="0 0 16 16"><circle cx="8" cy="8" r="7.2" fill="#fff" stroke="#777" stroke-width="1"/></svg>
<span class="a t" style="left:948.9px;top:679.34px;font-size:12px;line-height:12px;color:#333;font-weight:normal;font-family:'Liberation Sans', sans-serif;transform:scaleX(1.0148);transform-origin:0 0;">Informal</span>
<span class="a t" style="left:999px;top:679.34px;font-size:12px;line-height:12px;color:#333;font-weight:normal;font-family:'Liberation Sans', sans-serif;transform:scaleX(1.0445);transform-origin:0 0;">Mitchell</span>
<svg class="a" style="left:1049.5px;top:676.3px;" width="16" height="16" viewBox="0 0 16 16"><circle cx="8" cy="8" r="7.2" fill="#fff" stroke="#777" stroke-width="1"/></svg>
<span class="a t" style="left:1069.7px;top:679.34px;font-size:12px;line-height:12px;color:#333;font-weight:normal;font-family:'Liberation Sans', sans-serif;transform:scaleX(0.9796);transform-origin:0 0;">Custom</span>
<span class="a t" style="left:713.4px;top:708.84px;font-size:12px;line-height:12px;color:#333;font-weight:normal;font-family:'Liberation Sans', sans-serif;transform:scaleX(0.9700);transform-origin:0 0;">Business Role</span>
<div class="a" style="left:821px;top:703px;width:396px;height:22px;background:#fff;border:1px solid #4d5d6e;box-sizing:border-box;"></div>
<span class="a t" style="left:826px;top:709.14px;font-size:12px;line-height:12px;color:#111;font-weight:normal;font-family:'Liberation Sans', sans-serif;transform:scaleX(0.9700);transform-origin:0 0;">Constable</span>
<span class="a t" style="left:713.3px;top:740.24px;font-size:12px;line-height:12px;color:#3c82d8;font-weight:normal;font-family:'Liberation Sans', sans-serif;transform:scaleX(1.0070);transform-origin:0 0;">Add another staff member</span>
<span class="a t" style="left:940.3px;top:801.54px;font-size:12px;line-height:12px;color:#3c82d8;font-weight:normal;font-family:'Liberation Sans', sans-serif;transform:scaleX(0.9750);transform-origin:0 0;">Advanced view</span>
<div class="a" style="left:1034px;top:794px;width:92px;height:26px;background:#dadada;border:1px solid #adadad;box-sizing:border-box;border-radius:3px;"></div>
<span class="a t" style="left:1066px;top:801.84px;font-size:12px;line-height:12px;color:#333;font-weight:normal;font-family:'Liberation Sans', sans-serif;transform:scaleX(0.8996);transform-origin:0 0;">SAVE</span>
<div class="a" style="left:1138px;top:794px;width:92px;height:26px;background:#dadada;border:1px solid #adadad;box-sizing:border-box;border-radius:3px;"></div>
<span class="a t" style="left:1161.5px;top:801.84px;font-size:12px;line-height:12px;color:#333;font-weight:normal;font-family:'Liberation Sans', sans-serif;transform:scaleX(0.9078);transform-origin:0 0;">CANCEL</span>
<svg class="a" style="left:942.9000000000001px;top:63.8px;" width="38.6" height="38.6" viewBox="0 0 38.6 38.6"><defs><radialGradient id="g2"><stop offset="0.6" stop-color="#000" stop-opacity="0"/><stop offset="0.66" stop-color="#000" stop-opacity="0.10"/><stop offset="1" stop-color="#000" stop-opacity="0"/></radialGradient></defs><circle cx="19.3" cy="19.8" r="19.3" fill="url(#g2)"/><circle cx="19.3" cy="19.3" r="13.3" fill="rgba(110,110,110,0.12)" stroke="#ee7623" stroke-width="2.3"/></svg>
<span class="a t" style="left:957.9000000000001px;top:76.23px;font-size:14.5px;line-height:14.5px;color:#383838;font-weight:bold;font-family:'Liberation Sans', sans-serif;transform:scaleX(0.8913);transform-origin:0 0;">2</span>
<svg class="a" style="left:1218.1000000000001px;top:138.39999999999998px;" width="38.6" height="38.6" viewBox="0 0 38.6 38.6"><defs><radialGradient id="g3"><stop offset="0.6" stop-color="#000" stop-opacity="0"/><stop offset="0.66" stop-color="#000" stop-opacity="0.10"/><stop offset="1" stop-color="#000" stop-opacity="0"/></radialGradient></defs><circle cx="19.3" cy="19.8" r="19.3" fill="url(#g3)"/><circle cx="19.3" cy="19.3" r="13.3" fill="rgba(110,110,110,0.12)" stroke="#ee7623" stroke-width="2.3"/></svg>
<span class="a t" style="left:1233.1000000000001px;top:150.83px;font-size:14.5px;line-height:14.5px;color:#383838;font-weight:bold;font-family:'Liberation Sans', sans-serif;transform:scaleX(0.8913);transform-origin:0 0;">3</span>
<svg class="a" style="left:771.1px;top:468.5px;" width="38.6" height="38.6" viewBox="0 0 38.6 38.6"><defs><radialGradient id="g4"><stop offset="0.6" stop-color="#000" stop-opacity="0"/><stop offset="0.66" stop-color="#000" stop-opacity="0.10"/><stop offset="1" stop-color="#000" stop-opacity="0"/></radialGradient></defs><circle cx="19.3" cy="19.8" r="19.3" fill="url(#g4)"/><circle cx="19.3" cy="19.3" r="13.3" fill="rgba(110,110,110,0.12)" stroke="#ee7623" stroke-width="2.3"/></svg>
<span class="a t" style="left:786.1px;top:480.93px;font-size:14.5px;line-height:14.5px;color:#383838;font-weight:bold;font-family:'Liberation Sans', sans-serif;transform:scaleX(0.8913);transform-origin:0 0;">4</span>
<svg class="a" style="left:1218.1000000000001px;top:526.2px;" width="38.6" height="38.6" viewBox="0 0 38.6 38.6"><defs><radialGradient id="g5"><stop offset="0.6" stop-color="#000" stop-opacity="0"/><stop offset="0.66" stop-color="#000" stop-opacity="0.10"/><stop offset="1" stop-color="#000" stop-opacity="0"/></radialGradient></defs><circle cx="19.3" cy="19.8" r="19.3" fill="url(#g5)"/><circle cx="19.3" cy="19.3" r="13.3" fill="rgba(110,110,110,0.12)" stroke="#ee7623" stroke-width="2.3"/></svg>
<span class="a t" style="left:1233.1000000000001px;top:538.63px;font-size:14.5px;line-height:14.5px;color:#383838;font-weight:bold;font-family:'Liberation Sans', sans-serif;transform:scaleX(0.8913);transform-origin:0 0;">5</span>
<svg class="a" style="left:1218.2px;top:697.0px;" width="38.6" height="38.6" viewBox="0 0 38.6 38.6"><defs><radialGradient id="g6"><stop offset="0.6" stop-color="#000" stop-opacity="0"/><stop offset="0.66" stop-color="#000" stop-opacity="0.10"/><stop offset="1" stop-color="#000" stop-opacity="0"/></radialGradient></defs><circle cx="19.3" cy="19.8" r="19.3" fill="url(#g6)"/><circle cx="19.3" cy="19.3" r="13.3" fill="rgba(110,110,110,0.12)" stroke="#ee7623" stroke-width="2.3"/></svg>
<span class="a t" style="left:1233.2px;top:709.43px;font-size:14.5px;line-height:14.5px;color:#383838;font-weight:bold;font-family:'Liberation Sans', sans-serif;transform:scaleX(0.8913);transform-origin:0 0;">6</span>
<svg class="a" style="left:101.7px;top:375.9px;" width="38.6" height="38.6" viewBox="0 0 38.6 38.6"><defs><radialGradient id="g1"><stop offset="0.6" stop-color="#000" stop-opacity="0"/><stop offset="0.66" stop-color="#000" stop-opacity="0.10"/><stop offset="1" stop-color="#000" stop-opacity="0"/></radialGradient></defs><circle cx="19.3" cy="19.8" r="19.3" fill="url(#g1)"/><circle cx="19.3" cy="19.3" r="13.3" fill="rgba(110,110,110,0.12)" stroke="#ee7623" stroke-width="2.3"/></svg>
<svg class="a" style="left:117.5px;top:389.2px;" width="6" height="11" viewBox="0 0 6 11"><path d="M0.5 3.2L3.6 1.4V10.8" fill="none" stroke="#333" stroke-width="1.8"/></svg>
</body></html>
